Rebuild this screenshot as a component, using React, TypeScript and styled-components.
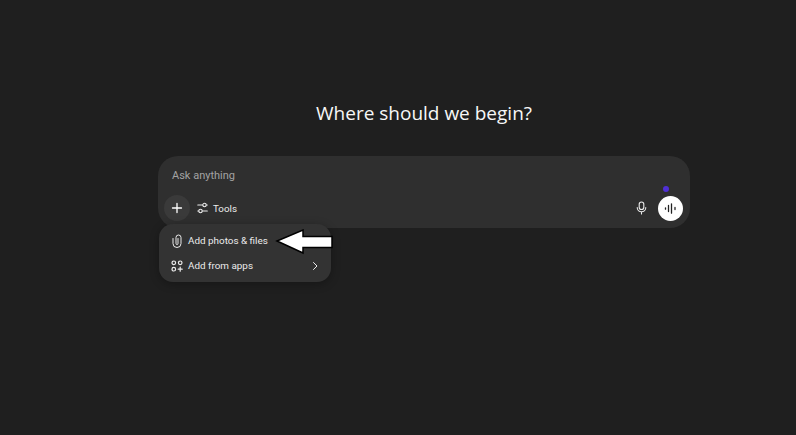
import React from 'react';
import styled, { createGlobalStyle } from 'styled-components';

const GlobalStyle = createGlobalStyle`
  html, body {
    margin: 0;
    padding: 0;
    height: 100%;
    background: #1f1f1f;
    overflow: hidden;
  }
  #root {
    height: 100%;
  }
`;

const Page = styled.main`
  width: 796px;
  height: 435px;
  box-sizing: border-box;
  padding: 99px 106px 0 158px;
  background: #1f1f1f;
  color: #fff;
  font-family: Roboto, "Open Sans", "Liberation Sans", sans-serif;
`;

const Title = styled.h1`
  margin: 0 0 29px;
  height: 28px;
  font-family: "Open Sans", "Noto Sans", sans-serif;
  font-size: 19px;
  line-height: 28px;
  font-weight: 400;
  text-align: center;
  color: #f7f7f7;
`;

const Composer = styled.div`
  position: relative;
  width: 532px;
  height: 72px;
  box-sizing: border-box;
  padding: 12px 7px 7px 6px;
  display: flex;
  flex-direction: column;
  justify-content: space-between;
  background: #2f2f2f;
  border-radius: 20px;
`;

const Placeholder = styled.div`
  padding-left: 8px;
  font-size: 11px;
  line-height: 16px;
  color: #a3a3a3;
`;

const Toolbar = styled.div`
  display: flex;
  align-items: center;
  height: 26px;
`;

const PlusButton = styled.div`
  width: 26px;
  height: 26px;
  border-radius: 50%;
  background: #3a3a3a;
  display: flex;
  align-items: center;
  justify-content: center;
  margin-right: 7px;
`;

const ToolsButton = styled.div`
  display: flex;
  align-items: center;
  gap: 5px;
  font-size: 9.8px;
  color: #ececec;
`;

const Spacer = styled.div`
  flex: 1;
`;

const MicButton = styled.div`
  display: flex;
  margin-right: 10px;
`;

const VoiceButton = styled.div`
  position: relative;
  width: 25px;
  height: 25px;
  border-radius: 50%;
  background: #fff;
  display: flex;
  align-items: center;
  justify-content: center;
`;

const Dot = styled.span`
  position: absolute;
  top: -10px;
  left: 5px;
  width: 6px;
  height: 6px;
  border-radius: 50%;
  background: #4f2fd6;
`;

const Menu = styled.div`
  position: absolute;
  top: 68px;
  left: 1px;
  width: 172px;
  height: 58px;
  box-sizing: border-box;
  padding: 4px 0 0;
  background: #333;
  border-radius: 14px;
  box-shadow: 0 2px 10px rgba(0, 0, 0, 0.3);
`;

const MenuItem = styled.div`
  height: 25px;
  display: flex;
  align-items: center;
  gap: 6px;
  padding: 0 12px 0 13px;
  font-size: 9.9px;
  color: #ececec;
`;

const MenuLabel = styled.span`
  flex: 1;
`;

const Pointer = styled.svg`
  position: absolute;
  top: 73px;
  left: 116px;
`;

const Icon = styled.svg`
  flex: none;
  fill: none;
  stroke: currentColor;
  stroke-linecap: round;
  stroke-linejoin: round;
`;

export default function App() {
  return (
    <Page>
      <GlobalStyle />
      <Title>Where should we begin?</Title>
      <Composer>
        <Placeholder>Ask anything</Placeholder>
        <Toolbar>
          <PlusButton>
            <Icon width="12" height="12" viewBox="0 0 12 12" strokeWidth="1.3">
              <path d="M6 1.500v9M1.500 6h9" />
            </Icon>
          </PlusButton>
          <ToolsButton>
            <Icon width="11" height="12" viewBox="0 0 11 12" strokeWidth="1.100">
              <path d="M.8 3h4.700M9.500 3h.8M.8 9h.8M5.500 9h4.800" />
              <circle cx="7.500" cy="3" r="1.700" />
              <circle cx="3.500" cy="9" r="1.700" />
            </Icon>
            Tools
          </ToolsButton>
          <Spacer />
          <MicButton>
            <Icon width="13" height="14" viewBox="0 0 13 14" strokeWidth="1.100" color="#ececec">
              <rect x="4.200" y="1" width="4.600" height="7.500" rx="2.300" />
              <path d="M2.200 6.500a4.300 4.300 0 0 0 8.600 0M6.500 11v2" />
            </Icon>
          </MicButton>
          <VoiceButton>
            <Dot />
            <Icon width="13" height="11" viewBox="0 0 13 11" strokeWidth="1.300" color="#222">
              <path d="M1.500 4.800v1.400M4.500 2.500v6M7.500 .8v9.400M11 4.500v2" />
            </Icon>
          </VoiceButton>
        </Toolbar>
        <Menu>
          <MenuItem>
            <Icon width="10" height="14" viewBox="0 0 10 14" strokeWidth="1">
              <path d="M1 4.500V9.500a4 4 0 0 0 8 0V3.500a2.500 2.500 0 0 0-5 0V9.500a1 1 0 0 0 2 0V4.500" />
            </Icon>
            <MenuLabel>Add photos &amp; files</MenuLabel>
          </MenuItem>
          <MenuItem>
            <Icon width="10" height="12" viewBox="0 0 10 12" strokeWidth="1.200" overflow="visible">
              <circle cx="1.800" cy="2.800" r="1.800" />
              <circle cx="8.200" cy="2.800" r="1.800" />
              <circle cx="1.800" cy="9.200" r="1.800" />
              <path d="M8.200 7.200v4M6.200 9.200h4" />
            </Icon>
            <MenuLabel>Add from apps</MenuLabel>
            <Icon width="8" height="10" viewBox="0 0 8 10" strokeWidth="1">
              <path d="M2.500 1.500 6 5 2.500 8.500" />
            </Icon>
          </MenuItem>
        </Menu>
        <Pointer width="60" height="28" viewBox="0 0 60 28">
          <path
            d="M3 12 L29 1 V7.500 H58 V18.500 H29 V24 Z"
            fill="#fff"
            stroke="#000"
            strokeWidth="1.500"
            strokeLinejoin="miter"
          />
        </Pointer>
      </Composer>
    </Page>
  );
}
